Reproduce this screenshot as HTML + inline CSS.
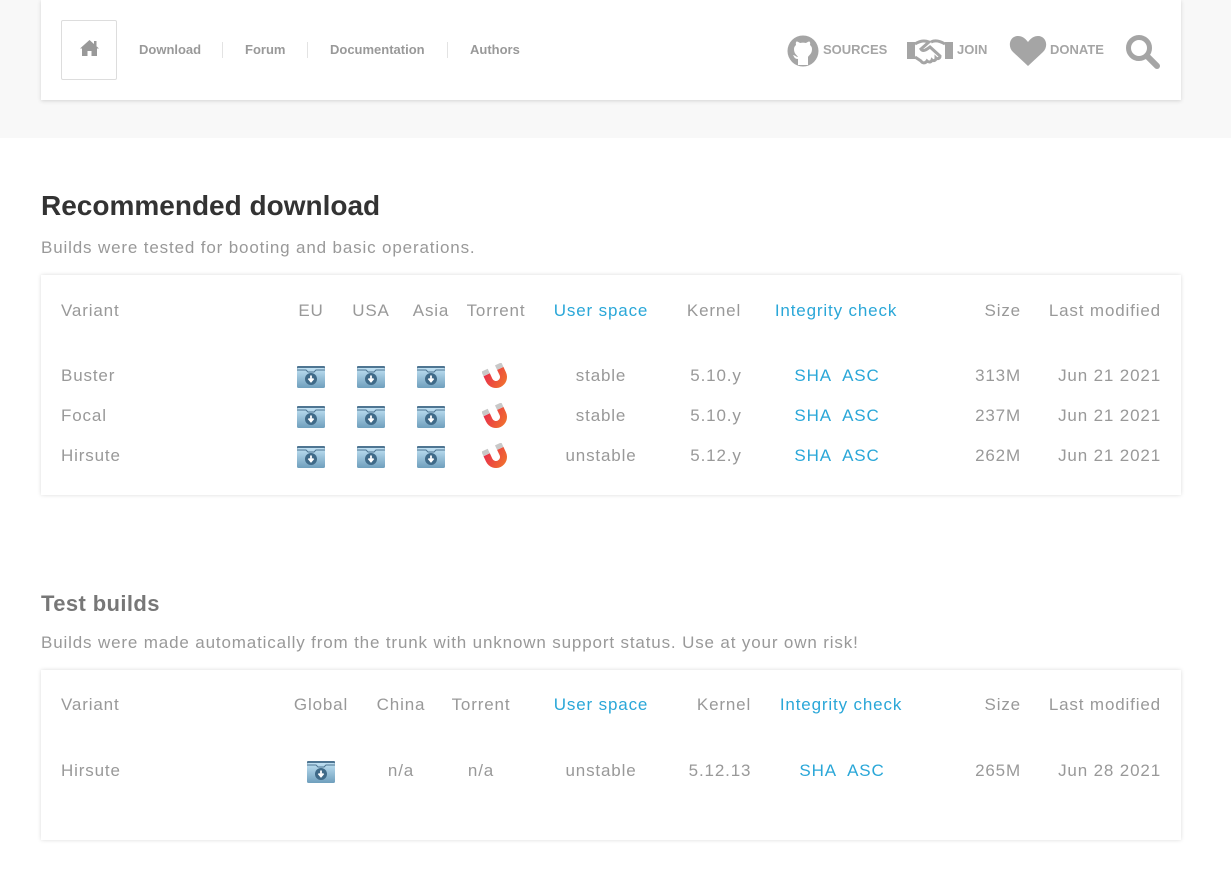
<!DOCTYPE html>
<html><head><meta charset="utf-8"><style>
*{margin:0;padding:0;box-sizing:border-box}
body{width:1231px;height:874px;background:#fff;font-family:"Liberation Sans",sans-serif;color:#999;position:relative;overflow:hidden}
.top{position:absolute;left:0;top:0;width:1231px;height:138px;background:#f8f8f8}
.hdr{position:absolute;left:41px;top:0;width:1140px;height:100px;background:#fff;box-shadow:0 1px 4px rgba(0,0,0,.15)}
.home{position:absolute;left:61px;top:20px;width:56px;height:60px;border:1px solid #ddd;border-radius:2px;background:#fff}
.nav{position:absolute;top:42px;font-size:13px;font-weight:bold;color:#999}
.sep{position:absolute;top:42px;width:1px;height:16px;background:#e3e3e3}
.r{position:absolute;font-size:13px;font-weight:bold;color:#a5a5a5;top:42px}
.a{position:absolute;white-space:nowrap;font-size:17px;color:#999;transform:translate(-50%,-50%);letter-spacing:.85px}
.l{transform:translate(0,-50%)}
.rt{transform:translate(-100%,-50%)}
.b{color:#2aa7d8}
.box{position:absolute;left:41px;width:1140px;background:#fff;box-shadow:0 0 4px rgba(0,0,0,.14)}
.fold{position:absolute;width:30px;height:24px;transform:translate(-50%,-50%)}
.mag{position:absolute;width:28px;height:28px;transform:translate(-50%,-50%)}
</style></head><body>
<div class="top"></div>
<div class="hdr"></div>
<div class="home"><svg style="position:absolute;left:17px;top:18px" width="21" height="18" viewBox="0 0 21 18"><path d="M10.5 1 L1 9.5 L3 9.5 L3 17 L8.5 17 L8.5 12 L12.5 12 L12.5 17 L18 17 L18 9.5 L20 9.5 Z" fill="#999"/><rect x="15" y="2" width="2.5" height="5" fill="#999"/></svg></div>
<span class="nav" style="left:139px">Download</span><div class="sep" style="left:222px"></div>
<span class="nav" style="left:245px">Forum</span><div class="sep" style="left:307px"></div>
<span class="nav" style="left:330px">Documentation</span><div class="sep" style="left:447px"></div>
<span class="nav" style="left:470px">Authors</span>
<svg style="position:absolute;left:787px;top:35px" width="32" height="32" viewBox="0 0 32 32"><circle cx="16" cy="16" r="15.5" fill="#a5a5a5"/><path d="M11 30 L11 24 C7 24 7 21 6 20 C8 20 9 22 11 22 C10 20 7 19 7 14 C7 12 8 11 9 10 C8.5 8 9 7 9.5 6.5 C11 6.5 12 7.5 13 8 C15 7.5 17 7.5 19 8 C20 7.5 21 6.5 22.5 6.5 C23 7 23.5 8 23 10 C24 11 25 12 25 14 C25 19 22 20 21 22 L21 30 Z" fill="#fff"/></svg>
<span class="r" style="left:823px">SOURCES</span>
<svg style="position:absolute;left:906px;top:37px" width="48" height="30" viewBox="0 0 48 30"><path d="M1 5 H9 V22 H1 Z M39 5 H47 V22 H39 Z" fill="#a5a5a5"/><path d="M9 7 C14 4 18 3 23 5 L15 12 C17 15 20 13 24 10 L34 19 C34 22 31 22 30 21 C30 24 27 24 26 23 C25 26 22 25 21 24 C19 27 16 26 15 24 L9 20" fill="none" stroke="#a5a5a5" stroke-width="3"/><path d="M39 7 C34 4 29 3 25 5" fill="none" stroke="#a5a5a5" stroke-width="3"/></svg>
<span class="r" style="left:957px">JOIN</span>
<svg style="position:absolute;left:1009px;top:34px" width="38" height="33" viewBox="0 0 38 33"><path d="M19 32 L4 18 C-2 12 1 2 9 2 C13 2 16 4 19 8 C22 4 25 2 29 2 C37 2 40 12 34 18 Z" fill="#a5a5a5"/></svg>
<span class="r" style="left:1050px">DONATE</span>
<svg style="position:absolute;left:1125px;top:34px" width="36" height="36" viewBox="0 0 36 36"><circle cx="14" cy="14" r="10.5" fill="none" stroke="#a5a5a5" stroke-width="5"/><path d="M22 22 L32 32" stroke="#a5a5a5" stroke-width="6" stroke-linecap="round"/></svg>

<div class="a l" style="left:41px;top:206px;font-size:28px;font-weight:bold;color:#333;letter-spacing:0">Recommended download</div>
<div class="a l" style="left:41px;top:248px">Builds were tested for booting and basic operations.</div>
<div class="box" style="top:275px;height:220px"></div>

<div class="a l" style="left:41px;top:604px;font-size:22px;font-weight:bold;color:#777;letter-spacing:.4px">Test builds</div>
<div class="a l" style="left:41px;top:643px">Builds were made automatically from the trunk with unknown support status. Use at your own risk!</div>
<div class="box" style="top:670px;height:170px"></div>

<svg width="0" height="0" style="position:absolute"><defs>
<linearGradient id="fg" x1="0" y1="0" x2="0" y2="1"><stop offset="0" stop-color="#bfe0f2"/><stop offset="1" stop-color="#6f9fbd"/></linearGradient>
<linearGradient id="mg" x1="0" y1="0" x2="1" y2="1"><stop offset="0" stop-color="#e8304a"/><stop offset="1" stop-color="#f27a2a"/></linearGradient>
<symbol id="F" viewBox="0 0 30 24"><rect x="1" y="1" width="28" height="3" rx="1" fill="#4e7592"/><rect x="1" y="3" width="28" height="20" rx="1.5" fill="url(#fg)"/><path d="M1 5 H10 L12 7 H18 L20 5 H29" stroke="#4e7592" stroke-width="1" fill="none"/><circle cx="15" cy="14" r="6" fill="#3f6a88"/><path d="M15 10.5 V16 M12.5 13.5 L15 16.5 L17.5 13.5" stroke="#fff" stroke-width="1.8" fill="none"/></symbol>
<symbol id="M" viewBox="0 0 28 28"><g transform="rotate(-25 14 14)"><path d="M3 8 L3 14 A11 11 0 0 0 25 14 L25 8 L18 8 L18 14 A4 4 0 0 1 10 14 L10 8 Z" fill="url(#mg)"/><path d="M3 3 L10 3 L10 8 L3 8 Z M18 3 L25 3 L25 8 L18 8 Z" fill="#c9c9c9"/></g></symbol>
</defs></svg>

<div class="a l" style="left:61px;top:311px">Variant</div>
<div class="a" style="left:311px;top:311px">EU</div>
<div class="a" style="left:371px;top:311px">USA</div>
<div class="a" style="left:431px;top:311px">Asia</div>
<div class="a" style="left:496px;top:311px">Torrent</div>
<div class="a b" style="left:601px;top:311px">User space</div>
<div class="a" style="left:714px;top:311px">Kernel</div>
<div class="a b" style="left:836px;top:311px">Integrity check</div>
<div class="a rt" style="left:1021px;top:311px">Size</div>
<div class="a rt" style="left:1161px;top:311px">Last modified</div>

<div class="a l" style="left:61px;top:376px">Buster</div>
<div class="a l" style="left:61px;top:416px">Focal</div>
<div class="a l" style="left:61px;top:456px">Hirsute</div>
<div class="a" style="left:601px;top:376px">stable</div>
<div class="a" style="left:601px;top:416px">stable</div>
<div class="a" style="left:601px;top:456px">unstable</div>
<div class="a" style="left:716px;top:376px">5.10.y</div>
<div class="a" style="left:716px;top:416px">5.10.y</div>
<div class="a" style="left:716px;top:456px">5.12.y</div>
<div class="a b" style="left:837px;top:376px">SHA&nbsp; ASC</div>
<div class="a b" style="left:837px;top:416px">SHA&nbsp; ASC</div>
<div class="a b" style="left:837px;top:456px">SHA&nbsp; ASC</div>
<div class="a rt" style="left:1021px;top:376px">313M</div>
<div class="a rt" style="left:1021px;top:416px">237M</div>
<div class="a rt" style="left:1021px;top:456px">262M</div>
<div class="a rt" style="left:1161px;top:376px">Jun 21 2021</div>
<div class="a rt" style="left:1161px;top:416px">Jun 21 2021</div>
<div class="a rt" style="left:1161px;top:456px">Jun 21 2021</div>

<svg class="fold" style="left:311px;top:377px"><use href="#F"/></svg>
<svg class="fold" style="left:371px;top:377px"><use href="#F"/></svg>
<svg class="fold" style="left:431px;top:377px"><use href="#F"/></svg>
<svg class="mag" style="left:496px;top:377px"><use href="#M"/></svg>
<svg class="fold" style="left:311px;top:417px"><use href="#F"/></svg>
<svg class="fold" style="left:371px;top:417px"><use href="#F"/></svg>
<svg class="fold" style="left:431px;top:417px"><use href="#F"/></svg>
<svg class="mag" style="left:496px;top:417px"><use href="#M"/></svg>
<svg class="fold" style="left:311px;top:457px"><use href="#F"/></svg>
<svg class="fold" style="left:371px;top:457px"><use href="#F"/></svg>
<svg class="fold" style="left:431px;top:457px"><use href="#F"/></svg>
<svg class="mag" style="left:496px;top:457px"><use href="#M"/></svg>

<div class="a l" style="left:61px;top:705px">Variant</div>
<div class="a" style="left:321px;top:705px">Global</div>
<div class="a" style="left:401px;top:705px">China</div>
<div class="a" style="left:481px;top:705px">Torrent</div>
<div class="a b" style="left:601px;top:705px">User space</div>
<div class="a" style="left:724px;top:705px">Kernel</div>
<div class="a b" style="left:841px;top:705px">Integrity check</div>
<div class="a rt" style="left:1021px;top:705px">Size</div>
<div class="a rt" style="left:1161px;top:705px">Last modified</div>

<div class="a l" style="left:61px;top:771px">Hirsute</div>
<svg class="fold" style="left:321px;top:772px"><use href="#F"/></svg>
<div class="a" style="left:401px;top:771px">n/a</div>
<div class="a" style="left:481px;top:771px">n/a</div>
<div class="a" style="left:601px;top:771px">unstable</div>
<div class="a" style="left:720px;top:771px">5.12.13</div>
<div class="a b" style="left:842px;top:771px">SHA&nbsp; ASC</div>
<div class="a rt" style="left:1021px;top:771px">265M</div>
<div class="a rt" style="left:1161px;top:771px">Jun 28 2021</div>
</body></html>
